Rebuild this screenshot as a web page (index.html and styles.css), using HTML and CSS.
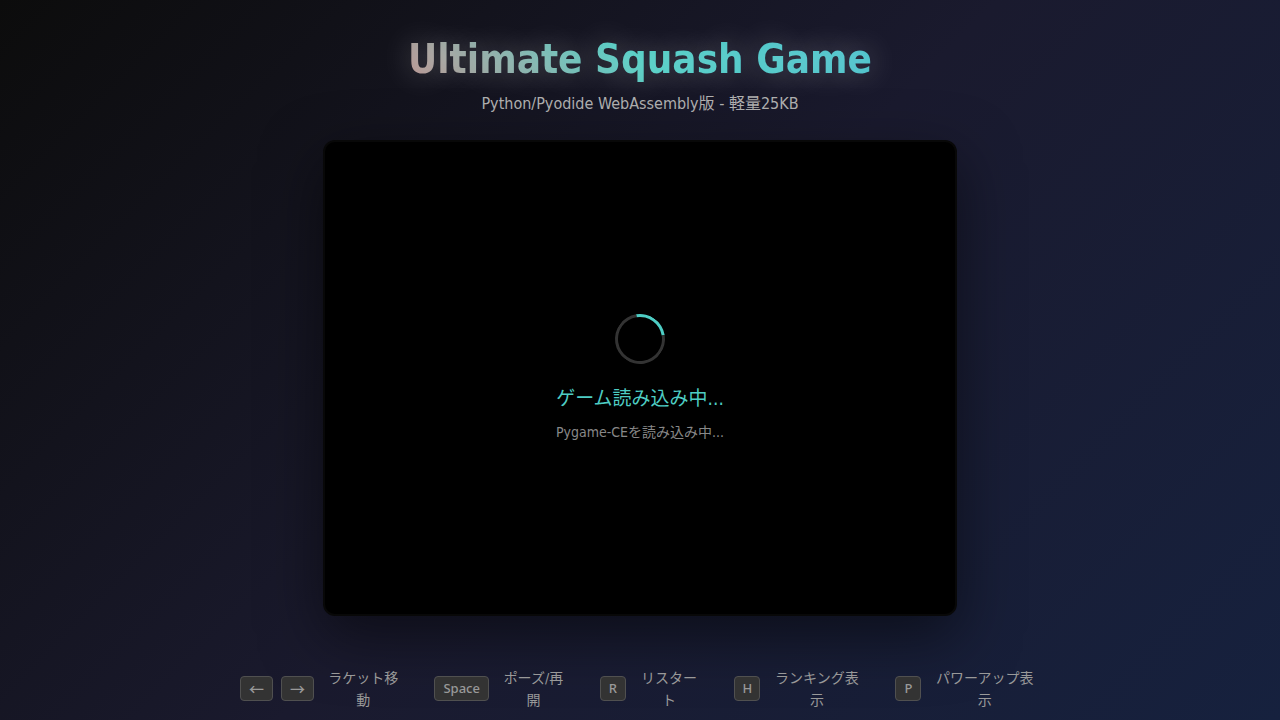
FILE: index.html
```html
<!DOCTYPE html>
<html lang="ja">
<head>
<meta charset="UTF-8">
<meta name="viewport" content="width=device-width, initial-scale=1">
<title>Ultimate Squash Game</title>
<link rel="stylesheet" href="styles.css">
</head>
<body>
<main class="page">
  <header class="header">
    <h1 class="title">Ultimate Squash Game</h1>
    <p class="subtitle">Python/Pyodide WebAssembly版 - 軽量25KB</p>
  </header>
  <section class="game" aria-busy="true">
    <div class="spinner"></div>
    <p class="loading">ゲーム読み込み中...</p>
    <p class="detail">Pygame-CEを読み込み中...</p>
  </section>
  <div class="controls">
    <div class="control"><kbd class="key key-arrow">←</kbd><kbd class="key key-arrow">→</kbd><span class="label">ラケット移動</span></div>
    <div class="control"><kbd class="key">Space</kbd><span class="label">ポーズ/再開</span></div>
    <div class="control"><kbd class="key key-letter">R</kbd><span class="label">リスタート</span></div>
    <div class="control"><kbd class="key key-letter">H</kbd><span class="label">ランキング表示</span></div>
    <div class="control"><kbd class="key key-letter">P</kbd><span class="label">パワーアップ表示</span></div>
  </div>
</main>
</body>
</html>
```
FILE: styles.css
```css
* { box-sizing: border-box; margin: 0; padding: 0; }
body {
  min-height: 100vh;
  overflow: hidden;
  background: linear-gradient(135deg, #0c0c0c 0%, #1a1a2e 50%, #16213e 100%);
  color: #fff;
  font-family: "DejaVu Sans Condensed", "Noto Sans CJK JP", sans-serif;
}
.page {
  display: flex;
  flex-direction: column;
  align-items: center;
  max-width: 800px;
  margin: 0 auto;
  padding-top: 35px;
}
.header { width: 100%; text-align: center; }
.title {
  font-size: 40px;
  line-height: 48px;
  font-weight: 700;
  background: linear-gradient(45deg, #ff6b6b, #4ecdc4, #45b7d1);
  -webkit-background-clip: text;
  background-clip: text;
  -webkit-text-fill-color: transparent;
  text-shadow: 0 0 30px rgba(255, 255, 255, 0.3);
}
.subtitle { margin-top: 9px; font-size: 16px; line-height: 24px; color: #b0b0b0; }
.game {
  display: flex;
  flex-direction: column;
  align-items: center;
  justify-content: center;
  width: 100%;
  max-width: 634px;
  aspect-ratio: 4 / 3;
  margin-top: 24px;
  background: #000;
  border: 2px solid #080808;
  border-radius: 12px;
  box-shadow: 0 20px 60px rgba(0, 0, 0, 0.5);
}
.spinner {
  width: 50px;
  height: 50px;
  border: 3px solid #333;
  border-top-color: #4ecdc4;
  border-radius: 50%;
  transform: rotate(36deg);
}
.loading { margin-top: 20px; font-size: 19px; line-height: 28px; color: #4ecdc4; }
.detail { margin-top: 10px; font-size: 14px; line-height: 20px; color: #888; }
.controls {
  display: flex;
  justify-content: center;
  gap: 30px;
  width: 100%;
  margin-top: 51px;
  font-size: 14px;
  line-height: 22px;
  color: #999;
}
.control { display: flex; align-items: center; gap: 8px; }
.key {
  flex: none;
  padding: 4px 8px;
  background: #333;
  border: 1px solid #505050;
  border-radius: 4px;
  font-family: "Noto Sans", "Noto Sans CJK JP", sans-serif;
  font-size: 13px;
  font-weight: 500;
  line-height: 15px;
  text-align: center;
}
.key-letter { width: 26px; padding: 4px 0; }
.key-arrow { font-family: "Noto Sans CJK JP", sans-serif; font-size: 15px; }
.label { padding: 0 2px; text-align: center; word-break: break-all; }
```
